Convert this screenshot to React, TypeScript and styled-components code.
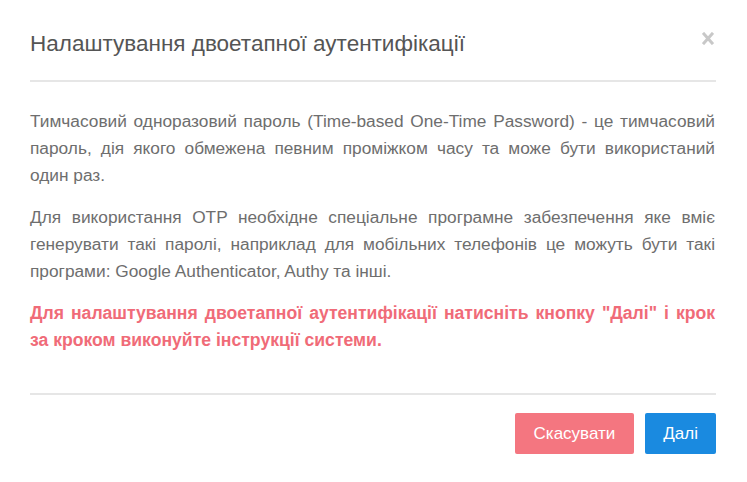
import React from "react";
import styled, { createGlobalStyle } from "styled-components";

const Global = createGlobalStyle`
  html, body { margin: 0; padding: 0; background: #fff; }
  body { font-family: "Liberation Sans", Arial, sans-serif; }
`;

const Modal = styled.div`
  width: 747px;
  height: 482px;
  box-sizing: border-box;
  padding: 0 31px 0 30px;
  background: #fff;
  display: flex;
  flex-direction: column;
`;

const Header = styled.div`
  display: flex;
  align-items: flex-start;
  justify-content: space-between;
  padding-top: 29px;
  box-sizing: border-box;
  border-bottom: 2px solid #e6e6e6;
  height: 82px;
`;

const Title = styled.h4`
  margin: 0;
  font-size: 22.5px;
  line-height: 30px;
  font-weight: normal;
  color: #555;
`;

const Close = styled.button`
  border: none;
  background: none;
  padding: 0;
  margin: 3px 2px 0 0;
  cursor: pointer;
  display: flex;
`;

const Body = styled.div`
  padding: 26px 1px 39px 0;
  border-bottom: 2px solid #e6e6e6;
  display: flex;
  flex-direction: column;
  gap: 15px;
`;

const Paragraph = styled.p<{ $accent?: boolean }>`
  margin: 0;
  font-size: ${(p) => (p.$accent ? "17.6px" : "17.3px")};
  line-height: 27px;
  text-align: justify;
  color: ${(p) => (p.$accent ? "#f06b78" : "#6e6e6e")};
  font-weight: ${(p) => (p.$accent ? "bold" : "normal")};
`;

const Footer = styled.div`
  display: flex;
  justify-content: flex-end;
  gap: 11px;
  padding-top: 18px;
`;

const Button = styled.button<{ $variant: "cancel" | "primary" }>`
  height: 41px;
  padding: 0 ${(p) => (p.$variant === "cancel" ? "19px" : "18px")};
  border: none;
  border-radius: 2px;
  font-family: "Liberation Sans", Arial, sans-serif;
  font-size: 17px;
  color: #fff;
  background: ${(p) => (p.$variant === "cancel" ? "#f47680" : "#1a8ae0")};
  cursor: pointer;
`;

export default function App() {
  return (
    <>
      <Global />
      <Modal>
        <Header>
          <Title>Налаштування двоетапної аутентифікації</Title>
          <Close aria-label="Закрити">
            <svg width="12" height="13" viewBox="0 0 12 13">
              <path d="M2 2 L10 11 M10 2 L2 11" stroke="#c8c8c8" strokeWidth="3" strokeLinecap="square" />
            </svg>
          </Close>
        </Header>
        <Body>
          <Paragraph>
            Тимчасовий одноразовий пароль (Time-based One-Time Password) - це тимчасовий пароль, дія якого
            обмежена певним проміжком часу та може бути використаний один раз.
          </Paragraph>
          <Paragraph>
            Для використання OTP необхідне спеціальне програмне забезпечення яке вміє генерувати такі паролі,
            наприклад для мобільних телефонів це можуть бути такі програми: Google Authenticator, Authy та інші.
          </Paragraph>
          <Paragraph $accent>
            Для налаштування двоетапної аутентифікації натисніть кнопку "Далі" і крок за кроком виконуйте
            інструкції системи.
          </Paragraph>
        </Body>
        <Footer>
          <Button $variant="cancel">Скасувати</Button>
          <Button $variant="primary">Далі</Button>
        </Footer>
      </Modal>
    </>
  );
}
